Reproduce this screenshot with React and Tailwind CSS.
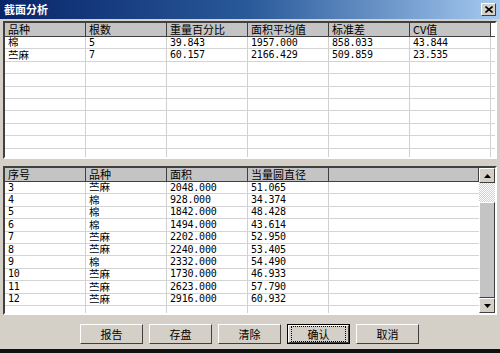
import React from 'react';

const cjk = "font-['Noto_Sans_CJK_SC',sans-serif] text-[11px]";
const cjkCell = "font-['Noto_Sans_CJK_SC',sans-serif] text-[10.5px]";
const num = "font-['DejaVu_Sans_Mono',monospace] text-[10px] tracking-[-0.2px]";

const topCols = ['品种', '根数', '重量百分比', '面积平均值', '标准差', 'CV值'];
const topRows = [
  ['棉', '5', '39.843', '1957.000', '858.033', '43.844'],
  ['苎麻', '7', '60.157', '2166.429', '509.859', '23.535'],
];

const lowCols = ['序号', '品种', '面积', '当量圆直径'];
const lowRows = [
  ['3', '苎麻', '2048.000', '51.065'],
  ['4', '棉', '928.000', '34.374'],
  ['5', '棉', '1842.000', '48.428'],
  ['6', '棉', '1494.000', '43.614'],
  ['7', '苎麻', '2202.000', '52.950'],
  ['8', '苎麻', '2240.000', '53.405'],
  ['9', '棉', '2332.000', '54.490'],
  ['10', '苎麻', '1730.000', '46.933'],
  ['11', '苎麻', '2623.000', '57.790'],
  ['12', '苎麻', '2916.000', '60.932'],
];

const isCjk = (s) => /[\u4e00-\u9fff]/.test(s);

function Cell({ text }) {
  return (
    <div
      className={`flex h-[11.4px] w-[81px] shrink-0 items-center whitespace-nowrap border-r border-[#d0d0d0] pl-[3px] leading-none text-black ${
        isCjk(text) ? cjkCell : num
      }`}
    >
      {text}
    </div>
  );
}

function HeadCell({ text, last }) {
  return (
    <div
      className={`flex h-[14px] shrink-0 items-center border-b border-r border-[#404040] bg-[#c4c4c4] pl-[3px] leading-none text-black ${cjk} ${
        last ? 'flex-1' : 'w-[81px]'
      }`}
    >
      {text}
    </div>
  );
}

function Grid({ cols, rows, total, extra }) {
  const body = [...rows];
  while (body.length < total) body.push(cols.map(() => ''));
  return (
    <div className="flex min-w-0 flex-1 flex-col overflow-hidden">
      <div className="flex">
        {cols.map((c, i) => (
          <HeadCell key={i} text={c} />
        ))}
        {extra ? <HeadCell text="" last /> : <div className="h-[14px] flex-1 border-b border-[#404040] bg-white" />}
      </div>
      {body.map((r, i) => (
        <div key={i} className="flex border-b border-[#d4d4d4]">
          {r.map((c, j) => (
            <Cell key={j} text={c} />
          ))}
          <div className="flex-1" />
        </div>
      ))}
    </div>
  );
}

function Arrow({ up }) {
  return (
    <div className="flex h-[15px] w-[16px] shrink-0 items-center justify-center border border-b-[#404040] border-l-white border-r-[#404040] border-t-white bg-[#d4d0c8]">
      <svg width="7" height="4" viewBox="0 0 7 4">
        <path d={up ? 'M3.5 0L7 4H0Z' : 'M0 0H7L3.5 4Z'} fill="#000" />
      </svg>
    </div>
  );
}

function Button({ label, focus }) {
  return (
    <div className={`flex h-[20px] w-[63px] items-center justify-center bg-[#d4d0c8] ${focus ? 'border border-black' : ''}`}>
      <div className="flex h-full w-full items-center justify-center border border-b-[#404040] border-l-white border-r-[#404040] border-t-white">
        <div className={`flex h-full w-full items-center justify-center ${focus ? 'm-[2px] border border-dotted border-black' : ''}`}>
          <span className={`${cjk} leading-none text-black`}>{label}</span>
        </div>
      </div>
    </div>
  );
}

export default function App() {
  return (
    <div className="flex h-[353px] w-[500px] flex-col overflow-hidden border-b-[4px] border-[#111] bg-[#d4d0c8]">
      <div className="flex h-[19px] shrink-0 items-center justify-between bg-gradient-to-r from-[#0a246a] via-[#2a5a9a] to-[#a6caf0] pl-[4px] pr-[4px]">
        <span className="font-['Noto_Sans_CJK_SC',sans-serif] text-[11px] font-bold leading-none text-white">截面分析</span>
        <div className="flex h-[13px] w-[15px] items-center justify-center border border-b-[#404040] border-l-white border-r-[#404040] border-t-white bg-[#d4d0c8]">
          <svg width="8" height="7" viewBox="0 0 8 7">
            <path d="M0.5 0.5L7.5 6.5M7.5 0.5L0.5 6.5" stroke="#000" strokeWidth="1.6" />
          </svg>
        </div>
      </div>

      <div className="flex flex-1 flex-col px-[3px] pt-[2px]">
        <div className="flex h-[138px] shrink-0 border-2 border-b-white border-l-[#404040] border-r-white border-t-[#404040] bg-white">
          <Grid cols={topCols} rows={topRows} total={10} />
        </div>

        <div className="mt-[7px] flex h-[149px] shrink-0 border-2 border-b-white border-l-[#404040] border-r-white border-t-[#404040] bg-white">
          <Grid cols={lowCols} rows={lowRows} total={11} extra />
          <div className="flex w-[16px] shrink-0 flex-col bg-[#e8e8e8]">
            <Arrow up />
            <div className="h-[19px] shrink-0 bg-[repeating-conic-gradient(#d4d0c8_0_25%,#ffffff_0_50%)] bg-[length:2px_2px]" />
            <div className="flex-1 border border-b-[#404040] border-l-white border-r-[#404040] border-t-white bg-[#c4c4c4]" />
            <Arrow />
          </div>
        </div>

        <div className="mt-[9px] flex gap-[6px] pl-[77px]">
          <Button label="报告" />
          <Button label="存盘" />
          <Button label="清除" />
          <Button label="确认" focus />
          <Button label="取消" />
        </div>
      </div>
    </div>
  );
}
